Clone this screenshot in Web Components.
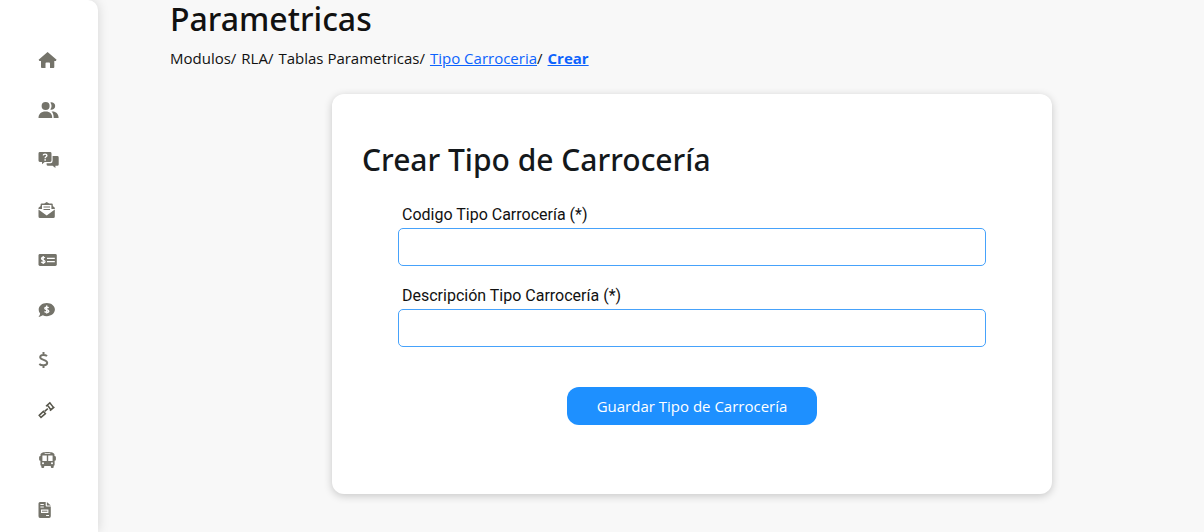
<!DOCTYPE html>
<html lang="es">
<head>
  <meta charset="UTF-8">
  <meta name="viewport" content="width=device-width, initial-scale=1.0">
  <title>Parametricas</title>
  <style>
    body {
      margin: 0;
      background-color: #f8f8f8;
      color: #111;
      font-family: "Open Sans", "Noto Sans", sans-serif;
      font-size: 15px;
    }
  </style>
</head>
<body>
  <app-layout>
    <side-bar slot="menu"></side-bar>
    <page-header titulo="Parametricas">
      <span>Modulos/</span>
      <span>RLA/</span>
      <span>Tablas Parametricas/</span>
      <span><a href="#tipo-carroceria">Tipo Carroceria</a>/</span>
      <a href="#crear" aria-current="page">Crear</a>
    </page-header>
    <form-card titulo="Crear Tipo de Carrocería" boton="Guardar Tipo de Carrocería">
      <form-field name="codigo" label="Codigo Tipo Carrocería (*)"></form-field>
      <form-field name="descripcion" label="Descripción Tipo Carrocería (*)"></form-field>
    </form-card>
  </app-layout>

  <script>
    class AppLayout extends HTMLElement {
      constructor() {
        super();
        this.attachShadow({ mode: "open" });
        this.shadowRoot.innerHTML = `
          <style>
            :host {
              display: flex;
              min-height: 100vh;
            }

            main {
              flex: 1;
              min-width: 0;
              padding: 0 0 38px 72px;
            }
          </style>

          <slot name="menu"></slot>
          <main><slot></slot></main>
        `;
      }
    }

    // every icon is drawn on the same 22x18 box
    const ICONS = {
      inicio: `<path d="M9.6 1 18.6 8.8 17.8 9.9H16.3V16.1Q16.3 17 15.4 17H12V12.4Q12 11.5 11.1 11.5H8.4Q7.5 11.5 7.5 12.4V17H3.9Q3 17 3 16.1V9.9H1.4L.6 8.8Z"/>`,
      usuarios: `<circle cx="7.6" cy="5" r="4"/>
        <path d="M.5 17C.5 13 3 10.5 7.6 10.5S14.2 13 14.2 17Z"/>
        <path d="M12.3 1.5a3.7 3.7 0 1 1 0 7 6 6 0 0 0 0-7ZM13.6 10.6C17.8 10.2 20.6 12.9 20.6 17H15.7C15.7 14.2 15.1 12.2 13.6 10.6Z"/>`,
      preguntas: `<path d="M1.9 1H12.1Q13.5 1 13.5 2.4V9.6Q13.5 11 12.1 11H6.7L4 13.2V11H1.9Q.5 11 .5 9.6V2.4Q.5 1 1.9 1Z"/>
        <path d="M14.6 5H19.3Q20.7 5 20.7 6.4V13.4Q20.7 14.8 19.3 14.8H17.4V17L14.6 14.8H10Q8.6 14.8 8.6 13.4V12.2H12.4Q14.6 12.2 14.6 10Z"/>
        <path d="M5.2 4.4C5.3 2.7 8.9 2.6 8.9 4.6 8.9 5.9 7.1 5.7 7.1 7.3" fill="none" stroke="#fff" stroke-width="1.4"/>
        <rect x="6.4" y="8.2" width="1.5" height="1.5" fill="#fff"/>`,
      correo: `<path d="M8.7 1 11.2 2.4H13.7Q14.8 2.4 14.8 3.5V5L16.8 6.7V8H.5V6.7L2.6 5V3.5Q2.6 2.4 3.7 2.4H6.2Z"/>
        <path d="M.5 8.6 8.7 14.4 16.8 8.6V15.5Q16.8 17 15.3 17H2Q.5 17 .5 15.5Z"/>
        <path d="M4 4H13.4V8.4H15L8.7 13 2.4 8.4H4Z" fill="#fff"/>
        <path d="M5.5 6H12M5.5 8.5H12" stroke="#74736a"/>`,
      cheque: `<rect x=".5" y="3" width="18.3" height="12" rx="1.4"/>
        <path d="M6.8 7C6.2 6 3.5 6 3.5 7.6S7 8.8 7 10.5 4 12 3.2 10.9M5.2 5V13M9 7.4H16.8M9 10.6H16.8" fill="none" stroke="#fff" stroke-width="1.3"/>`,
      comentario: `<path d="M8.8 2C13.4 2 16.9 4.9 16.9 8.6S13.4 15.2 8.8 15.2C7.3 15.2 5.9 14.9 4.8 14.3 3.5 15.2 2.1 15.8.5 15.8 1.4 14.9 2 13.8 2.1 12.6 1.2 11.5.7 10.1.7 8.6.7 4.9 4.2 2 8.8 2Z"/>
        <path d="M10.7 6.7C9.8 5.9 6.8 5.7 6.8 7.2S10.8 8.6 10.8 10.2 7.5 11.4 6.5 10.4M8.7 4.6V12.6" fill="none" stroke="#fff" stroke-width="1.4"/>`,
      dinero: `<path d="M9 5.1C7.5 3.6 2.2 3.2 2.2 6.2S9.2 8.6 9.2 11.8 3.4 14.8 1.3 13M5.5 1V4M5.5 14V17" fill="none" stroke="#74736a" stroke-width="2"/>`,
      martillo: `<path d="M9.4 4 12 2 15.4 6.4 12.8 8.8ZM8 5.2 12.4 1.4M12 9.8 16.4 6M9.8 7.6 6.6 10.4" fill="none" stroke="#57564b" stroke-width="1.5"/>
        <path d="M5.4 10.4 1.2 14.4 3 16.4 7.4 12.6Z" fill="none" stroke="#57564b" stroke-width="1.5"/>`,
      bus: `<path d="M9.5 1C13 1 16.5 1.8 16.5 3.5V5Q17.9 5 17.9 6.2V8.6Q17.9 9.8 16.6 9.8V13.7Q16.6 14.5 15.7 14.8V16Q15.7 17 14.7 17H13.8Q12.8 17 12.8 16V15H6.2V16Q6.2 17 5.2 17H4.3Q3.3 17 3.3 16V14.8Q2.4 14.5 2.4 13.7V9.8Q1.1 9.8 1.1 8.6V6.2Q1.1 5 2.5 5V3.5C2.5 1.8 6 1 9.5 1Z"/>
        <path d="M4.4 4.6H8.8V9.9H4.4ZM10.2 4.6H14.6V9.9H10.2ZM6.7 2.3H12.3V3.1H6.7Z" fill="#fff"/>
        <circle cx="5" cy="12.3" r="1" fill="#fff"/><circle cx="14" cy="12.3" r="1" fill="#fff"/>`,
      factura: `<path d="M2 1H7.7V4.6Q7.7 5.5 8.6 5.5H12.8V15.3Q12.8 17 11.1 17H2Q.5 17 .5 15.3V2.6Q.5 1 2 1Z"/>
        <path d="M8.9 1 12.8 4.4H8.9Z"/>
        <path d="M2.4 3.5H5.8M2.4 6H5.8M8.1 14.5H11" stroke="#fff"/>
        <path d="M3 8.5H10.4V12H3Z" fill="#fff"/>
        <path d="M4 10.2H9.4" stroke="#74736a"/>`,
    };

    class SideBar extends HTMLElement {
      constructor() {
        super();
        this.attachShadow({ mode: "open" });
        this.render();
      }

      render() {
        const links = Object.keys(ICONS)
          .map(
            (name) => `
              <a href="#${name}" aria-label="${name}">
                <svg viewBox="0 0 22 18" width="22" height="18" aria-hidden="true">${ICONS[name]}</svg>
              </a>`
          )
          .join("");

        this.shadowRoot.innerHTML = `
          <style>
            :host {
              display: block;
              flex: none;
              width: 98px;
              background-color: #fff;
              border-top-right-radius: 10px;
              box-shadow: 0 0 12px rgba(0, 0, 0, 0.15);
            }

            nav {
              display: flex;
              flex-direction: column;
              padding-top: 35px;
              height: calc(100vh - 35px);
              overflow: hidden;
            }

            a {
              display: flex;
              flex: none;
              align-items: center;
              height: 50px;
              padding-left: 38px;
            }

            svg {
              fill: #74736a;
            }
          </style>

          <nav>${links}</nav>
        `;
      }
    }

    class PageHeader extends HTMLElement {
      constructor() {
        super();
        this.attachShadow({ mode: "open" });
        this.shadowRoot.innerHTML = `
          <style>
            :host {
              display: block;
            }

            h1 {
              margin: 0;
              font-family: "Noto Sans", sans-serif;
              font-size: 32px;
              font-weight: 500;
              line-height: 38px;
            }

            nav {
              display: flex;
              flex-wrap: wrap;
              gap: 5px;
              margin-top: 8px;
              line-height: 24px;
            }
          </style>

          <h1>${this.getAttribute("titulo")}</h1>
          <nav aria-label="Ruta"><slot></slot></nav>
        `;
        this.styleLinks();
      }

      // links come from the slot
      styleLinks() {
        this.querySelectorAll("a").forEach((link) => {
          link.style.color = "#0d63fd";
          if (link.hasAttribute("aria-current")) link.style.fontWeight = "700";
        });
      }
    }

    class FormCard extends HTMLElement {
      constructor() {
        super();
        this.attachShadow({ mode: "open" });
        this.shadowRoot.innerHTML = `
          <style>
            * {
              box-sizing: border-box;
            }

            :host {
              display: flex;
              justify-content: center;
              margin-top: 24px;
              padding-left: 10px;
            }

            form {
              width: 720px;
              max-width: 100%;
              min-height: 400px;
              padding: 46px 30px;
              background-color: #fff;
              border-radius: 12px;
              box-shadow: 0 2px 8px rgba(0, 0, 0, 0.2);
            }

            h2 {
              margin: 0;
              color: #14181b;
              font-family: "Noto Sans", sans-serif;
              font-size: 30px;
              font-weight: 500;
              line-height: 40px;
            }

            .fields {
              display: flex;
              flex-direction: column;
              gap: 19px;
              margin-top: 24px;
              padding: 0 36px;
            }

            button {
              display: block;
              height: 38px;
              margin: 40px auto 0;
              padding: 0 30px;
              border: 0;
              border-radius: 12px;
              background-color: #1e90ff;
              color: #fff;
              font-family: inherit;
              font-size: 15px;
              cursor: pointer;
            }
          </style>

          <form>
            <h2>${this.getAttribute("titulo")}</h2>
            <div class="fields"><slot></slot></div>
            <button type="button">${this.getAttribute("boton")}</button>
          </form>
        `;
      }
    }

    class FormField extends HTMLElement {
      constructor() {
        super();
        this.attachShadow({ mode: "open" });
        const name = this.getAttribute("name");
        this.shadowRoot.innerHTML = `
          <style>
            :host {
              display: block;
              font-family: Roboto, sans-serif;
              font-size: 16px;
            }

            label {
              display: block;
              padding: 0 0 2px 4px;
              line-height: 22px;
            }

            input {
              display: block;
              box-sizing: border-box;
              width: 100%;
              height: 38px;
              padding: 6px 12px;
              border: 1px solid #46a2fb;
              border-radius: 5px;
              background-color: #fff;
              font: inherit;
            }
          </style>

          <label for="${name}">${this.getAttribute("label")}</label>
          <input type="text" id="${name}" name="${name}">
        `;
      }
    }

    customElements.define("app-layout", AppLayout);
    customElements.define("side-bar", SideBar);
    customElements.define("page-header", PageHeader);
    customElements.define("form-card", FormCard);
    customElements.define("form-field", FormField);
  </script>
</body>
</html>
